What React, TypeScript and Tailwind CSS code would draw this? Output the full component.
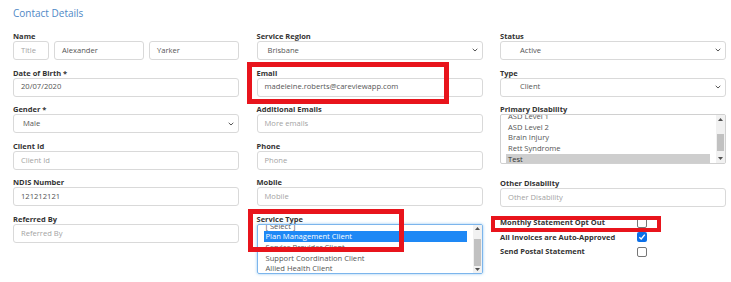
import React from "react";

const Label = ({ children }: { children: React.ReactNode }) => (
  <div className="h-[10px] leading-[10px] text-[7.5px] font-bold text-[#333] whitespace-nowrap">{children}</div>
);

const Input = ({ value, placeholder, className = "" }: { value?: string; placeholder?: string; className?: string }) => (
  <div
    className={`h-[19px] border border-[#d9d9d9] rounded-[3px] px-[7px] flex items-center text-[7.6px] whitespace-nowrap overflow-hidden ${
      value ? "text-[#555]" : "text-[#a3a3a3]"
    } ${className}`}
  >
    {value ?? placeholder}
  </div>
);

const Chevron = () => (
  <svg width="6" height="4" viewBox="0 0 6 4" className="shrink-0">
    <path d="M0.7 0.8 L3 3 L5.3 0.8" fill="none" stroke="#555" strokeWidth="1" />
  </svg>
);

const Select = ({ value, pl }: { value: string; pl: string }) => (
  <div className={`h-[19px] border border-[#d9d9d9] rounded-[3px] ${pl} pr-[4px] flex items-center justify-between text-[7.6px] text-[#555]`}>
    <span>{value}</span>
    <Chevron />
  </div>
);

const Field = ({ label, children, className = "" }: { label: string; children: React.ReactNode; className?: string }) => (
  <div className={`flex flex-col ${className}`}>
    <Label>{label}</Label>
    {children}
  </div>
);

const Scrollbar = ({ thumbTop, thumbH }: { thumbTop: string; thumbH: string }) => (
  <div className="w-[9px] h-full bg-[#f1f1f1] flex flex-col justify-between items-center shrink-0">
    <div className="h-[9px] w-full flex items-center justify-center">
      <svg width="5" height="3" viewBox="0 0 5 3"><path d="M0 3 L2.5 0 L5 3 Z" fill="#505050" /></svg>
    </div>
    <div className="flex-1 w-full flex flex-col">
      <div className={thumbTop} />
      <div className={`${thumbH} w-[7px] mx-auto bg-[#c1c1c1]`} />
    </div>
    <div className="h-[9px] w-full flex items-center justify-center">
      <svg width="5" height="3" viewBox="0 0 5 3"><path d="M0 0 L2.5 3 L5 0 Z" fill="#505050" /></svg>
    </div>
  </div>
);

const Listbox = ({
  options,
  selected,
  selClass,
  selText,
  offset,
  focused,
  thumbTop,
  thumbH,
  pl,
}: {
  options: string[];
  selected: string;
  selClass: string;
  selText: string;
  offset: string;
  focused?: boolean;
  thumbTop: string;
  thumbH: string;
  pl: string;
}) => (
  <div
    className={`h-[50px] border rounded-[2px] flex overflow-hidden ${
      focused ? "border-[#7cb5ec] shadow-[0_0_3px_rgba(102,175,233,0.7)]" : "border-[#d0d0d0]"
    }`}
  >
    <div className={`flex-1 overflow-hidden ${pl} pr-[6px]`}>
      <div className={`flex flex-col ${offset}`}>
        {options.map((o) => (
          <div
            key={o}
            className={`h-[10.6px] leading-[10.6px] text-[7.6px] px-[2px] whitespace-nowrap ${
              o === selected ? `${selClass} ${selText}` : "text-[#555]"
            }`}
          >
            {o}
          </div>
        ))}
      </div>
    </div>
    <Scrollbar thumbTop={thumbTop} thumbH={thumbH} />
  </div>
);

const Checkbox = ({ checked }: { checked?: boolean }) =>
  checked ? (
    <div className="w-[10px] h-[10px] rounded-[2px] bg-[#0b6fe8] flex items-center justify-center">
      <svg width="8" height="8" viewBox="0 0 8 8">
        <path d="M1.3 4.2 L3.2 6 L6.8 1.6" fill="none" stroke="#fff" strokeWidth="1.4" />
      </svg>
    </div>
  ) : (
    <div className="w-[10px] h-[10px] rounded-[2px] border border-[#767676] bg-white" />
  );

const CheckRow = ({ label, checked }: { label: string; checked?: boolean }) => (
  <div className="h-[14.5px] flex items-center">
    <div className="w-[137px] text-[7.5px] font-bold text-[#333] whitespace-nowrap">{label}</div>
    <Checkbox checked={checked} />
  </div>
);

export default function App() {
  return (
    <div className="relative w-[731px] h-[282px] overflow-hidden bg-white pl-[13px] pr-[5px] pt-[6.4px] font-['Open_Sans',sans-serif]">
      <h2 className="text-[10px] leading-[14px] text-[#4f88c6] mb-[10.6px]">Contact Details</h2>
      <div className="grid grid-cols-3 gap-x-[17.5px]">
        <div className="flex flex-col gap-[7.6px]">
          <Field label="Name">
            <div className="flex gap-[5px]">
              <Input placeholder="Title" className="w-[36px]" />
              <Input value="Alexander" className="flex-1" />
              <Input value="Yarker" className="flex-1" />
            </div>
          </Field>
          <Field label="Date of Birth *">
            <Input value="20/07/2020" />
          </Field>
          <Field label="Gender *">
            <Select value="Male" pl="pl-[9px]" />
          </Field>
          <Field label="Client Id">
            <Input placeholder="Client Id" />
          </Field>
          <Field label="NDIS Number">
            <Input value="121212121" />
          </Field>
          <Field label="Referred By">
            <Input placeholder="Referred By" />
          </Field>
        </div>
        <div className="flex flex-col gap-[7.6px]">
          <Field label="Service Region">
            <Select value="Brisbane" pl="pl-[10px]" />
          </Field>
          <Field label="Email">
            <Input value="madeleine.roberts@careviewapp.com" />
          </Field>
          <Field label="Additional Emails">
            <Input placeholder="More emails" />
          </Field>
          <Field label="Phone">
            <Input placeholder="Phone" />
          </Field>
          <Field label="Mobile">
            <Input placeholder="Mobile" />
          </Field>
          <Field label="Service Type">
            <Listbox
              options={[
                "[ Select ]",
                "Plan Management Client",
                "Service Provider Client",
                "Support Coordination Client",
                "Allied Health Client",
                "Other Client",
                "Other",
              ]}
              selected="Plan Management Client"
              selClass="bg-[#1e88f5]"
              selText="text-white"
              offset="-mt-[4.2px]"
              focused
              thumbTop="h-[8px]"
              thumbH="h-[27px]"
              pl="pl-[6px]"
            />
          </Field>
        </div>
        <div className="flex flex-col gap-[7.6px]">
          <Field label="Status">
            <Select value="Active" pl="pl-[19px]" />
          </Field>
          <Field label="Type">
            <Select value="Client" pl="pl-[19px]" />
          </Field>
          <Field label="Primary Disability">
            <Listbox
              options={["ASD Level 1", "ASD Level 2", "Brain Injury", "Rett Syndrome", "Test"]}
              selected="Test"
              selClass="bg-[#cecece]"
              selText="text-[#333]"
              offset="-mt-[4px]"
              thumbTop="h-[10px]"
              thumbH="h-[17px]"
              pl="pl-[5px]"
            />
          </Field>
          <Field label="Other Disability" className="mt-[6.4px]">
            <Input placeholder="Other Disability" />
          </Field>
          <div className="flex flex-col mt-[0.8px]">
            <CheckRow label="Monthly Statement Opt Out" />
            <CheckRow label="All Invoices are Auto-Approved" checked />
            <CheckRow label="Send Postal Statement" />
          </div>
        </div>
      </div>

      <div className="absolute left-[247px] top-[62px] w-[202px] h-[42px] border-[5.5px] border-[#e8141c]" />
      <div className="absolute left-[248px] top-[209px] w-[156px] h-[43px] border-[5.5px] border-[#e8141c]" />
      <div className="absolute left-[491px] top-[216px] w-[170px] h-[16px] border-[4px] border-[#e8141c]" />
    </div>
  );
}
